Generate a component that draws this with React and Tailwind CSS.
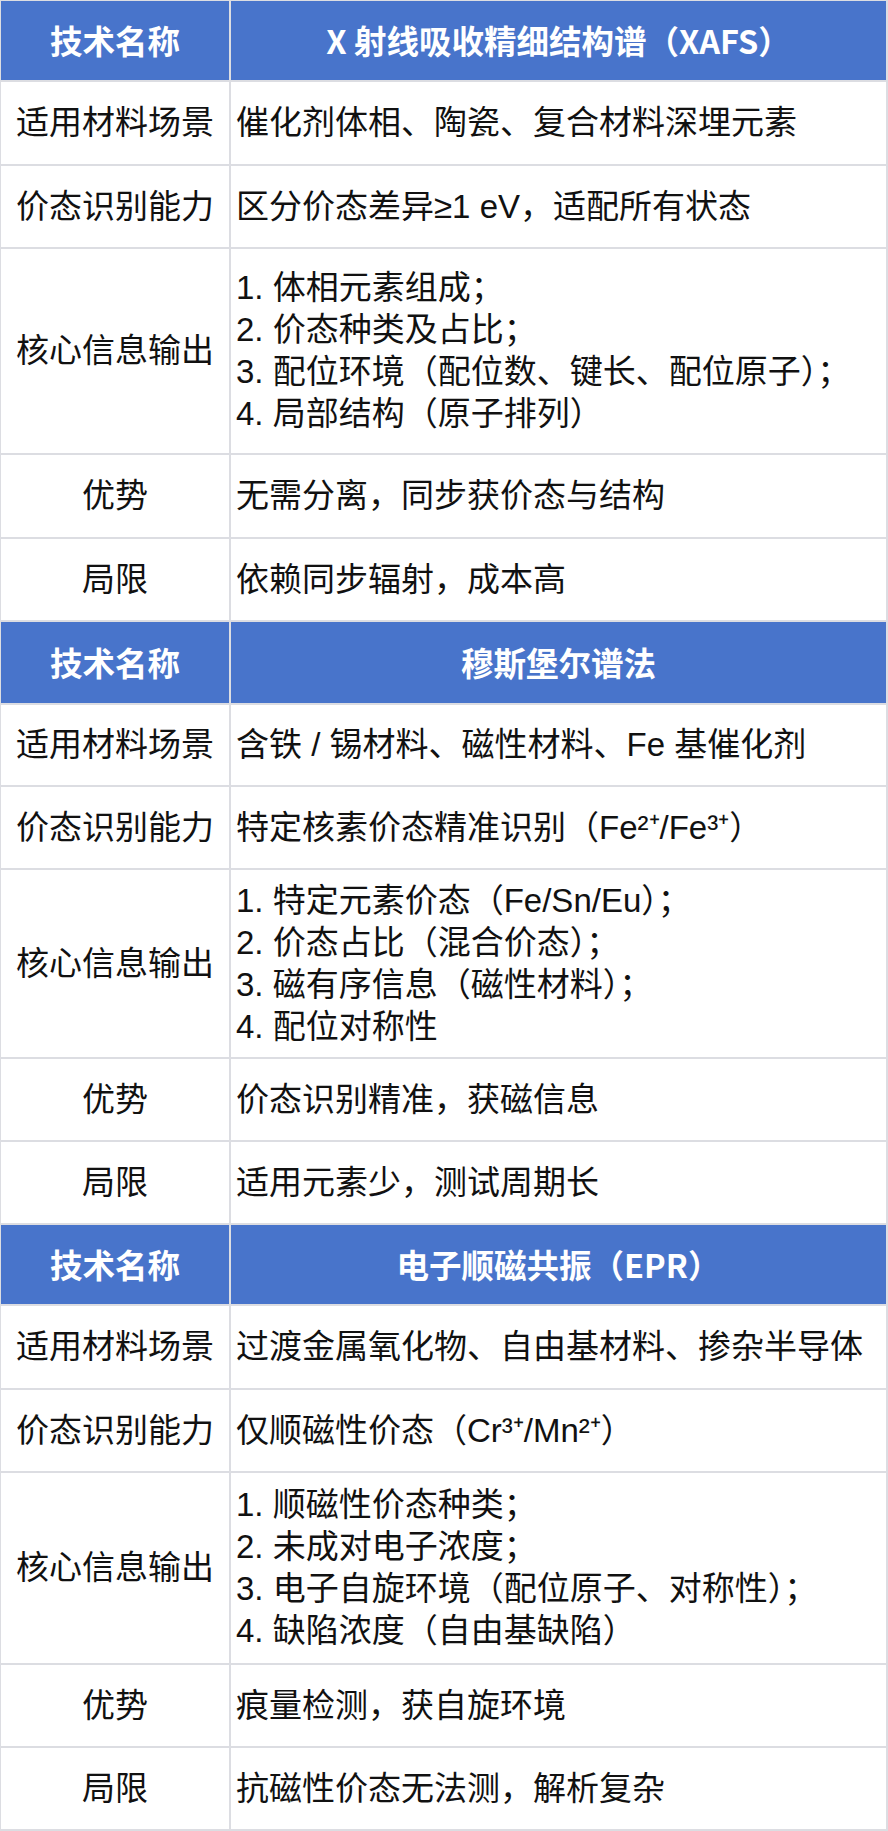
import React from "react";

const sections = [
  {
    title: "X 射线吸收精细结构谱（XAFS）",
    heights: ["h-[81px]", "h-[84px]", "h-[83px]", "h-[206px]", "h-[84px]", "h-[83px]"],
    scene: "催化剂体相、陶瓷、复合材料深埋元素",
    ability: "区分价态差异≥1 eV，适配所有状态",
    output: [
      "1. 体相元素组成；",
      "2. 价态种类及占比；",
      "3. 配位环境（配位数、键长、配位原子）；",
      "4. 局部结构（原子排列）",
    ],
    pros: "无需分离，同步获价态与结构",
    cons: "依赖同步辐射，成本高",
  },
  {
    title: "穆斯堡尔谱法",
    heights: ["h-[83px]", "h-[82px]", "h-[83px]", "h-[189px]", "h-[83px]", "h-[83px]"],
    scene: "含铁 / 锡材料、磁性材料、Fe 基催化剂",
    ability: "特定核素价态精准识别（Fe²⁺/Fe³⁺）",
    output: [
      "1. 特定元素价态（Fe/Sn/Eu）；",
      "2. 价态占比（混合价态）；",
      "3. 磁有序信息（磁性材料）；",
      "4. 配位对称性",
    ],
    pros: "价态识别精准，获磁信息",
    cons: "适用元素少，测试周期长",
  },
  {
    title: "电子顺磁共振（EPR）",
    heights: ["h-[81px]", "h-[84px]", "h-[83px]", "h-[192px]", "h-[83px]", "h-[83px]"],
    scene: "过渡金属氧化物、自由基材料、掺杂半导体",
    ability: "仅顺磁性价态（Cr³⁺/Mn²⁺）",
    output: [
      "1. 顺磁性价态种类；",
      "2. 未成对电子浓度；",
      "3. 电子自旋环境（配位原子、对称性）；",
      "4. 缺陷浓度（自由基缺陷）",
    ],
    pros: "痕量检测，获自旋环境",
    cons: "抗磁性价态无法测，解析复杂",
  },
];

const bodyFont = {
  fontFamily: '"Liberation Sans", "Noto Sans CJK SC", sans-serif',
};

const headFont = { fontFamily: '"Noto Sans CJK SC", sans-serif' };

const Row = ({ height, label, children }) => (
  <div className={`flex border-b-2 border-[#dcdde2] ${height}`}>
    <div className="w-[230px] shrink-0 border-r-2 border-[#dcdde2] flex items-center justify-center text-[33px] text-[#111]">
      {label}
    </div>
    <div className="flex-1 flex items-center pl-[5px] text-[33px] text-[#111]">
      {children}
    </div>
  </div>
);

const Section = ({ s }) => (
  <div>
    <div className={`flex border-b-2 border-[#dcdde2] bg-[#4874cb] ${s.heights[0]}`}>
      <div
        className="w-[230px] shrink-0 border-r-2 border-[#dcdde2] flex items-center justify-center text-white font-bold text-[32.5px]"
        style={headFont}
      >
        技术名称
      </div>
      <div
        className="flex-1 flex items-center justify-center text-white font-bold text-[32.5px]"
        style={headFont}
      >
        {s.title}
      </div>
    </div>
    <Row height={s.heights[1]} label="适用材料场景">
      {s.scene}
    </Row>
    <Row height={s.heights[2]} label="价态识别能力">
      {s.ability}
    </Row>
    <Row height={s.heights[3]} label="核心信息输出">
      <div className="flex flex-col">
        {s.output.map((line, i) => (
          <div key={i} className="leading-[42px]">
            {line}
          </div>
        ))}
      </div>
    </Row>
    <Row height={s.heights[4]} label="优势">
      {s.pros}
    </Row>
    <Row height={s.heights[5]} label="局限">
      {s.cons}
    </Row>
  </div>
);

export default function App() {
  return (
    <div className="w-[888px] bg-white" style={bodyFont}>
      <div className="border-t border-l border-r-2 border-[#dcdde2]">
        {sections.map((s, i) => (
          <Section key={i} s={s} />
        ))}
      </div>
    </div>
  );
}
